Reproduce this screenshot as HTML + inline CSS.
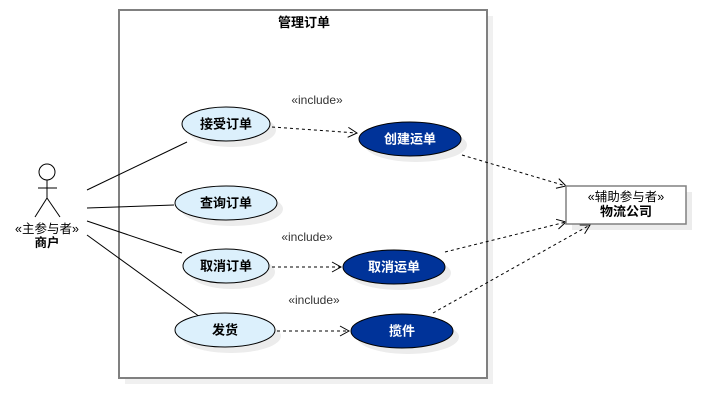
<!DOCTYPE html>
<html><head><meta charset="utf-8"><style>
html,body{margin:0;padding:0;background:#fff;}
svg{display:block;font-family:"Liberation Sans","Noto Sans CJK SC",sans-serif;}
</style></head><body>
<svg width="727" height="418" viewBox="0 0 727 418" xmlns="http://www.w3.org/2000/svg">
<defs>
<marker id="a" markerWidth="12" markerHeight="12" refX="10" refY="6" orient="auto" markerUnits="userSpaceOnUse">
<path d="M1,1 L10,6 L1,11" fill="none" stroke="#000" stroke-width="1"/>
</marker>
</defs>
<rect x="125" y="16" width="368" height="368" fill="#f0f0f0"/>
<rect x="119" y="10" width="368" height="368" fill="#fff" stroke="#808080" stroke-width="2"/>
<text x="304" y="27" font-size="13" font-weight="bold" text-anchor="middle" fill="#000">管理订单</text>
<g stroke="#000" stroke-width="1" fill="none">
<circle cx="47" cy="172" r="8" fill="#fff"/>
<line x1="47" y1="180" x2="47" y2="198"/>
<line x1="38" y1="188" x2="57" y2="188"/>
<line x1="47" y1="198" x2="35" y2="217"/>
<line x1="47" y1="198" x2="60" y2="217"/>
</g>
<text x="47" y="233" font-size="12.5" text-anchor="middle">«主参与者»</text>
<text x="47" y="247" font-size="12.5" font-weight="bold" text-anchor="middle">商户</text>
<g stroke="#000" stroke-width="1">
<line x1="87" y1="190" x2="187" y2="142"/>
<line x1="87" y1="208" x2="174" y2="205"/>
<line x1="87" y1="221" x2="182" y2="253"/>
<line x1="87" y1="235" x2="200" y2="317"/>
</g>
<g fill="#ececec">
<ellipse cx="232" cy="130" rx="44" ry="17"/>
<ellipse cx="232" cy="209" rx="51" ry="17"/>
<ellipse cx="232" cy="272" rx="43" ry="17"/>
<ellipse cx="231" cy="336" rx="50" ry="17"/>
<ellipse cx="416" cy="145" rx="51" ry="17"/>
<ellipse cx="400" cy="273" rx="51" ry="17"/>
<ellipse cx="408" cy="337" rx="51" ry="17"/>
<rect x="572" y="192" width="120" height="38"/>
</g>
<g fill="#dcf0fc" stroke="#000" stroke-width="1">
<ellipse cx="226" cy="124" rx="44" ry="17"/>
<ellipse cx="226" cy="203" rx="51" ry="17"/>
<ellipse cx="226" cy="266" rx="43" ry="17"/>
<ellipse cx="225" cy="330" rx="50" ry="17"/>
</g>
<g font-size="13" font-weight="bold" text-anchor="middle" fill="#000">
<text x="226" y="128.5">接受订单</text>
<text x="226" y="207.5">查询订单</text>
<text x="226" y="270.5">取消订单</text>
<text x="225" y="334.5">发货</text>
</g>
<g fill="#003399" stroke="#000" stroke-width="1">
<ellipse cx="410" cy="139" rx="51" ry="17"/>
<ellipse cx="394" cy="267" rx="51" ry="17"/>
<ellipse cx="402" cy="331" rx="51" ry="17"/>
</g>
<g font-size="13" font-weight="bold" text-anchor="middle" fill="#fff">
<text x="410" y="143.5">创建运单</text>
<text x="394" y="271.5">取消运单</text>
<text x="402" y="335.5">揽件</text>
</g>
<g stroke="#000" stroke-width="1" stroke-dasharray="3,3" fill="none" marker-end="url(#a)">
<line x1="272" y1="127" x2="357" y2="133"/>
<line x1="272" y1="267" x2="341" y2="267"/>
<line x1="277" y1="331" x2="349" y2="331"/>
<line x1="462" y1="155" x2="566" y2="186"/>
<line x1="445" y1="252" x2="566" y2="222"/>
<line x1="433" y1="313" x2="590" y2="225"/>
</g>
<g font-size="12" text-anchor="middle" fill="#333">
<text x="317" y="104">«include»</text>
<text x="307" y="241">«include»</text>
<text x="314" y="304">«include»</text>
</g>
<rect x="566" y="186" width="120" height="38" fill="#fff" stroke="#808080" stroke-width="1.5"/>
<text x="626" y="201" font-size="12.5" text-anchor="middle">«辅助参与者»</text>
<text x="626" y="216" font-size="13" font-weight="bold" text-anchor="middle">物流公司</text>
</svg>
</body></html>
